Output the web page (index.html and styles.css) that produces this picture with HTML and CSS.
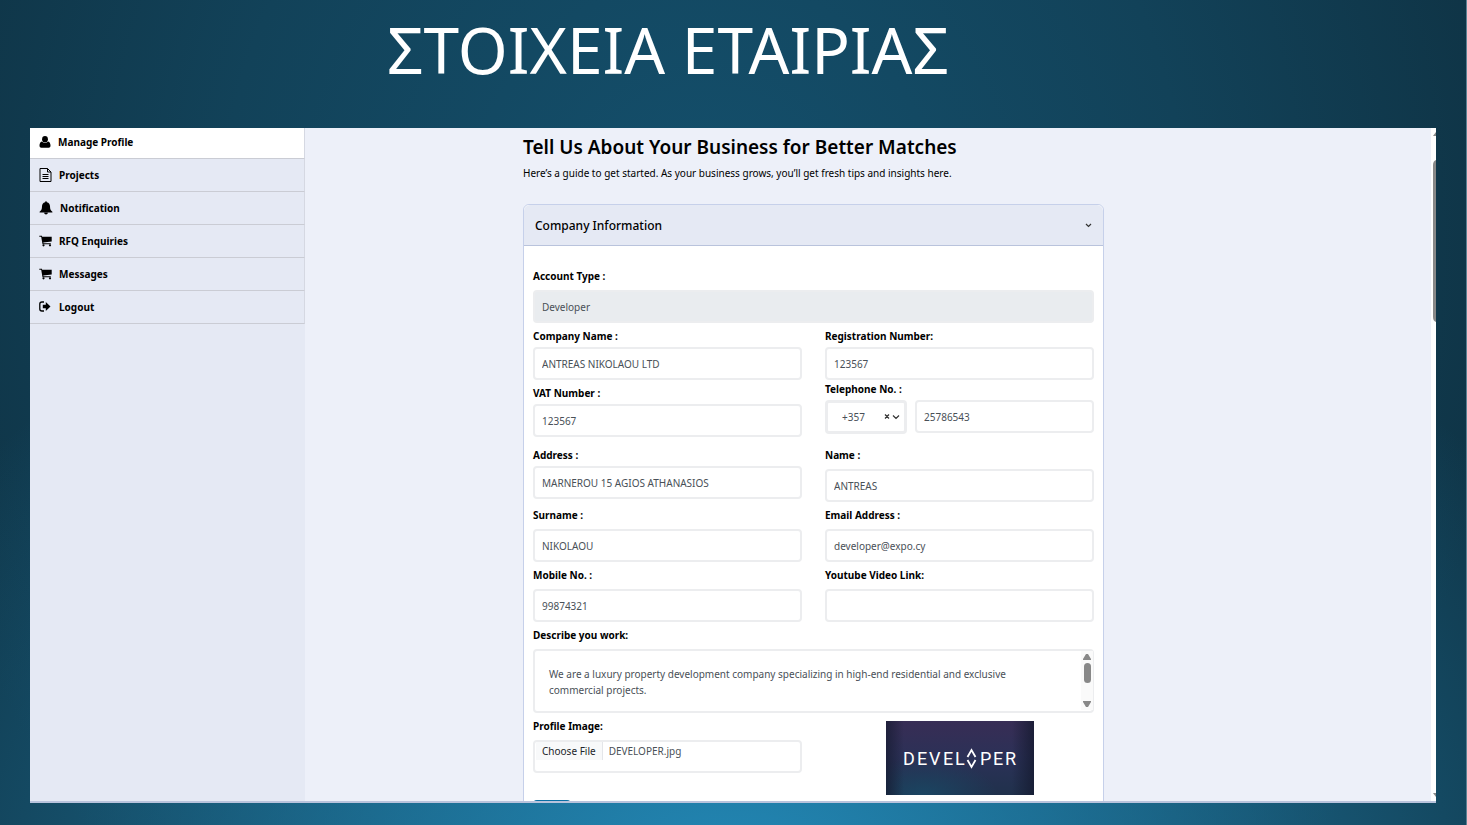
FILE: index.html
```html
<!DOCTYPE html>
<html lang="el">
<head>
<meta charset="UTF-8" />
<meta name="viewport" content="width=device-width, initial-scale=1" />
<title>Στοιχεία εταιρίας</title>
<link rel="stylesheet" href="styles.css">
</head>
<body>

<h1 class="slide-title">ΣΤΟΙΧΕΙΑ ΕΤΑΙΡΙΑΣ</h1>

<div class="panel">
  <nav class="sidebar">
    <a class="active" href="#">
      <svg width="12" height="12" viewBox="0 0 12 12"><ellipse cx="6" cy="3.3" rx="2.9" ry="3.3"/><path d="M2.9 5.6C1.2 6 .5 7.7.5 9.8c0 1.2.7 1.9 1.8 1.9h7.4c1.1 0 1.8-.7 1.8-1.9 0-2.1-.7-3.8-2.4-4.2a4 4 0 0 1-6.2 0z"/></svg>
      Manage Profile
    </a>
    <a href="#">
      <svg width="13" height="14" viewBox="0 0 13 14" fill="none" stroke="#000"><path d="M1 .5h7.5L12 4v9.500H1zM8.500.5V4H12M3.500 6.500h6M3.500 8.500h6M3.500 10.500h6"/></svg>
      Projects
    </a>
    <a href="#">
      <svg width="14" height="14" viewBox="0 0 14 14"><path d="M7 .3c.6 0 .9.4.9.9C10 1.600 11 3.300 11 5.300c0 3 .8 4.300 2.400 5.400v.8H.6v-.8C2.200 9.600 3 8.300 3 5.300c0-2 1-3.700 3.100-4.100 0-.5.300-.9.900-.9zM5.200 11.800h3.600c0 1-.8 1.700-1.800 1.700s-1.800-.7-1.800-1.700z"/></svg>
      Notification
    </a>
    <a href="#">
      <svg width="13" height="12" viewBox="0 0 13 12"><path d="M.3.700h2.300c.4 0 .5.500.6 1h9.500v4.700L4.300 7.500l.1.700h7.400v1H3.500L2.200 1.700H.3z"/><circle cx="4.500" cy="10.300" r="1.100"/><circle cx="11" cy="10.300" r="1.100"/></svg>
      RFQ Enquiries
    </a>
    <a href="#">
      <svg width="13" height="12" viewBox="0 0 13 12"><path d="M.3.700h2.300c.4 0 .5.500.6 1h9.500v4.700L4.300 7.500l.1.700h7.400v1H3.500L2.200 1.700H.3z"/><circle cx="4.500" cy="10.300" r="1.100"/><circle cx="11" cy="10.300" r="1.100"/></svg>
      Messages
    </a>
    <a href="#">
      <svg width="13" height="12" viewBox="0 0 13 12"><path d="M5 1H3C1.700 1 .8 1.800.8 3v5c0 1.200.9 2 2.200 2h2" fill="none" stroke="#000" stroke-width="1.300"/><path d="M3.800 3.700h3V1L11.500 5.500 6.800 10V7.300h-3z"/></svg>
      Logout
    </a>
  </nav>

  <main class="content">
    <div class="inner">
      <h2>Tell Us About Your Business for Better Matches</h2>
      <p class="intro">Here’s a guide to get started. As your business grows, you’ll get fresh tips and insights here.</p>

      <section class="card">
        <button class="card-header" type="button">
          Company Information
          <svg width="7" height="5" viewBox="0 0 7 5"><path d="M1 1l2.500 2.500L6 1" fill="none" stroke="#333" stroke-width="1.200"/></svg>
        </button>

        <form class="form">
          <div class="field wide">
            <label for="account">Account Type :</label>
            <input type="text" id="account" value="Developer" disabled>
          </div>
          <div class="field tight">
            <label for="company">Company Name :</label>
            <input type="text" id="company" value="ANTREAS NIKOLAOU LTD">
          </div>
          <div class="field tight">
            <label for="registration">Registration Number:</label>
            <input type="text" id="registration" value="123567">
          </div>
          <div class="field tight">
            <label for="vat">VAT Number :</label>
            <input type="text" id="vat" value="123567">
          </div>
          <div class="field tight phone">
            <label for="telephone">Telephone No. :</label>
            <div class="phone-row">
              <div class="code">
                <select aria-label="Country code">
                  <option>+357</option>
                </select>
                <svg width="16" height="8" viewBox="0 0 16 8"><path d="M1 1.500l4 4M5 1.500l-4 4M9 2.500l3 3 3-3" fill="none" stroke="#333" stroke-width="1.200"/></svg>
              </div>
              <input type="tel" id="telephone" value="25786543">
            </div>
          </div>
          <div class="field tight">
            <label for="address">Address :</label>
            <input type="text" id="address" value="MARNEROU 15 AGIOS ATHANASIOS">
          </div>
          <div class="field">
            <label for="name">Name :</label>
            <input type="text" id="name" value="ANTREAS">
          </div>
          <div class="field">
            <label for="surname">Surname :</label>
            <input type="text" id="surname" value="NIKOLAOU">
          </div>
          <div class="field">
            <label for="email">Email Address :</label>
            <input type="email" id="email" value="developer@expo.cy">
          </div>
          <div class="field">
            <label for="mobile">Mobile No. :</label>
            <input type="tel" id="mobile" value="99874321">
          </div>
          <div class="field">
            <label for="youtube">Youtube Video Link:</label>
            <input type="url" id="youtube">
          </div>
          <div class="field wide">
            <label for="work">Describe you work:</label>
            <div class="work">
              <textarea id="work">We are a luxury property development company specializing in high-end residential and exclusive commercial projects.</textarea>
              <svg class="work-scroll" width="12" height="59" viewBox="0 0 12 59"><path fill="#fafafa" d="M0 0h12v59H0z"/><path fill="#888" d="M5 3h2l3 5v1H2V8zM5 56h2l3-5v-1H2v1z"/><rect x="3" y="12" width="7" height="20" rx="3.500" fill="#888"/></svg>
            </div>
          </div>
          <div class="field">
            <label for="image">Profile Image:</label>
            <input type="file" id="image">
          </div>
          <svg class="preview" width="148" height="74" viewBox="0 0 148 74" role="img" aria-label="Developer">
            <defs>
              <linearGradient id="base" x1="0" y1="0" x2="0" y2="1">
                <stop offset="0" stop-color="#382d55"/>
                <stop offset=".5" stop-color="#2b3157"/>
                <stop offset="1" stop-color="#20314c"/>
              </linearGradient>
              <radialGradient id="blue" cx=".25" cy="1" r=".5">
                <stop offset="0" stop-color="#1b4562"/>
                <stop offset="1" stop-color="#1b4562" stop-opacity="0"/>
              </radialGradient>
              <linearGradient id="edge">
                <stop offset="0" stop-color="#151a30" stop-opacity=".7"/>
                <stop offset=".12" stop-color="#151a30" stop-opacity="0"/>
                <stop offset=".85" stop-color="#151a30" stop-opacity="0"/>
                <stop offset="1" stop-color="#151a30" stop-opacity=".8"/>
              </linearGradient>
            </defs>
            <rect width="148" height="74" fill="url(#base)"/>
            <rect width="148" height="74" fill="url(#blue)"/>
            <rect width="148" height="74" fill="url(#edge)"/>
            <text class="preview-text" y="44" x="17 31 43 57 69 94 107 119">DEVELPER</text>
            <path d="M81.500 36l4-7 4 7M81.500 39l4 7 4-7" fill="none" stroke="#fff" stroke-width="1.800"/>
          </svg>
          <button class="save" type="submit" aria-label="Save"></button>
        </form>
      </section>
    </div>
  </main>

  <svg class="scroll" width="5" height="673" viewBox="0 0 5 673" preserveAspectRatio="none">
    <path fill="#fff" d="M0 0h5v673H0z"/>
    <path fill="#888" d="M5 4v4H2zM2 665h3v4z"/>
    <path fill="#888" d="M5 32Q2 33 2 37v152q0 4 3 5z"/>
  </svg>
</div>

<script>
  const files = new DataTransfer();
  files.items.add(new File([''], 'DEVELOPER.jpg', { type: 'image/jpeg' }));
  document.getElementById('image').files = files.files;
</script>

</body>
</html>
```
FILE: styles.css
```css
* {
  box-sizing: border-box;
}
body {
  margin: 0;
  height: 100vh;
  display: flex;
  flex-direction: column;
  overflow: hidden;
  font-family: "Noto Sans", sans-serif;
  font-size: 10px;
  color: #000;
  border-right: 1px solid #5c8294;
  background:
    radial-gradient(ellipse 65% 85% at 50% 108%, #2389b7 0%, rgba(35, 137, 183, 0) 100%),
    radial-gradient(ellipse 55% 110% at 48% 30%, #14506d 0%, #124259 60%, #0f3446 100%);
}
.slide-title {
  margin: 0;
  padding-right: 130px;
  height: 128px;
  line-height: 100px;
  font-size: 64px;
  font-weight: 400;
  text-align: center;
  color: #fff;
}
.panel {
  flex: 1;
  min-height: 0;
  display: flex;
  margin: 0 30px 22px;
  overflow: hidden;
  background: #edf0f9;
  border-bottom: 2px solid #b9c3dc;
}
.sidebar {
  flex: 0 0 275px;
  background: #e5e9f4;
}
.sidebar a {
  display: flex;
  align-items: center;
  gap: 7px;
  height: 33px;
  padding: 0 9px;
  border-bottom: 1px solid #caccd4;
  border-right: 1px solid #d5d8e2;
  color: #000;
  font-weight: 700;
  text-decoration: none;
}
.sidebar .active {
  height: 31px;
  padding-bottom: 3px;
  background: #fff;
}
.content {
  flex: 1;
  display: flex;
  justify-content: center;
  padding-right: 109px;
}
.inner {
  width: 100%;
  max-width: 581px;
  padding-top: 6px;
}
h2 {
  margin: 0;
  font-size: 19px;
  line-height: 26px;
  font-weight: 600;
}
.intro {
  margin: 5px 0 22px;
  line-height: 17px;
}
.card {
  background: #fff;
  border: 1px solid #c6d0ea;
  border-radius: 6px 6px 0 0;
}
.card-header {
  display: flex;
  justify-content: space-between;
  align-items: center;
  width: 100%;
  height: 41px;
  padding: 0 11px;
  border: 0;
  border-bottom: 1px solid #b9c3dc;
  border-radius: 6px 6px 0 0;
  background: #e5e9f4;
  font: 500 12px "Noto Sans", sans-serif;
  color: #000;
}
.form {
  display: grid;
  grid-template-columns: 1fr 1fr;
  gap: 5px 23px;
  padding: 22px 9px;
}
.field {
  display: flex;
  flex-direction: column;
  gap: 6px;
}
.tight {
  gap: 3px;
}
.wide {
  grid-column: 1 / -1;
}
label {
  font-weight: 700;
  line-height: 16px;
}
input, select, textarea {
  width: 100%;
  height: 33px;
  padding: 0 7px;
  border: 2px solid #ecedef;
  border-radius: 4px;
  background: #fff;
  font: 10px "Noto Sans", sans-serif;
  color: #495057;
}
input:disabled {
  background: #e9ecef;
}
.phone {
  margin: -4px 0 8px;
}
.phone-row {
  display: flex;
  gap: 8px;
}
.code {
  position: relative;
  flex: 0 0 82px;
}
.code select {
  appearance: none;
  height: 34px;
  padding: 0 14px;
  border-width: 3px;
}
.code svg {
  position: absolute;
  right: 7px;
  top: 13px;
}
.work {
  position: relative;
  height: 64px;
}
textarea {
  display: block;
  height: 64px;
  padding: 15px 60px 0 14px;
  line-height: 16px;
  resize: none;
  overflow: hidden;
}
.work-scroll {
  position: absolute;
  right: 1px;
  top: 2px;
}
input[type="file"] {
  padding: 0 1px 9px;
}
input::file-selector-button {
  height: 18px;
  margin: 0 6px 0 0;
  padding: 0 6px;
  border: 0;
  border-right: 1px solid #e4e6e9;
  background: #f8f9fa;
  font: 10px "Noto Sans", sans-serif;
  color: #212529;
}
.preview {
  justify-self: center;
  margin-top: 3px;
}
.preview-text {
  font-family: Roboto, sans-serif;
  font-size: 18px;
  fill: #fff;
}
.save {
  width: 38px;
  height: 30px;
  border: 0;
  border-radius: 4px;
  background: #0b6fa4;
}
.scroll {
  flex: 0 0 5px;
  height: 100%;
}
```
